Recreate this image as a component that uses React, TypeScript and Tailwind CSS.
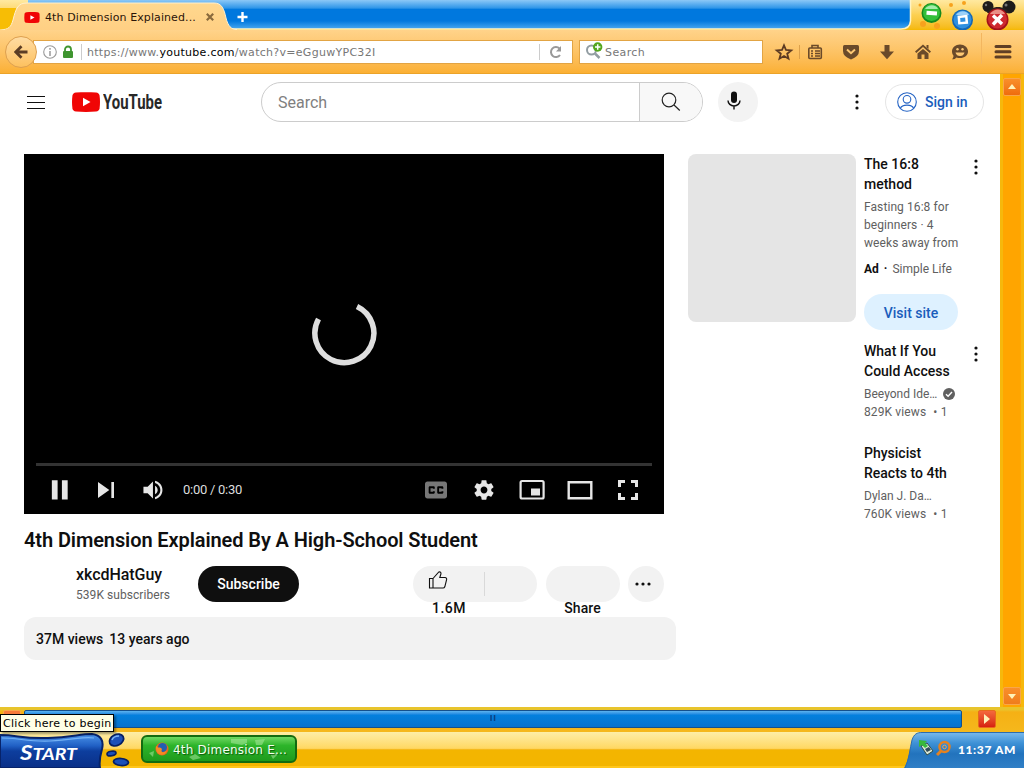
import React from "react";

type IconProps = { className?: string };

const Dots = ({ className = "" }: IconProps) => (
  <svg viewBox="0 0 4 16" className={`w-1 h-4 shrink-0 ${className}`} fill="#0f0f0f">
    <circle cx="2" cy="2" r="1.600" />
    <circle cx="2" cy="8" r="1.600" />
    <circle cx="2" cy="14" r="1.600" />
  </svg>
);

const PlayLogo = ({ className = "" }: IconProps) => (
  <svg viewBox="0 0 28 20" className={className}>
    <path
      d="M4 .5C10 0 18 0 24 .5c2 .2 3.300 1.300 3.600 3.300.5 4 .5 8.400 0 12.400-.3 2-1.600 3.100-3.600 3.300-6 .5-14 .5-20 0-2-.2-3.300-1.300-3.600-3.300-.5-4-.5-8.400 0-12.400C.7 1.800 2 .7 4 .5Z"
      fill="#f00505"
    />
    <path d="M11 5.700 18.500 10 11 14.300Z" fill="#fff" />
  </svg>
);

const TabStrip = () => (
  <div className="relative flex h-[30px] bg-linear-to-b from-[#ffe9a0] via-[#fcd050] to-[#f5b800]">
    <svg viewBox="0 0 1024 30" className="absolute inset-0 w-full h-full">
      <defs>
        <linearGradient id="strip" x1="0" y1="0" x2="0" y2="1">
          <stop offset="0" stopColor="#8cc8f6" />
          <stop offset="0.1" stopColor="#6ab6f2" />
          <stop offset="0.28" stopColor="#2e95e8" />
          <stop offset="0.32" stopColor="#0078de" />
          <stop offset="0.72" stopColor="#0078de" />
          <stop offset="0.9" stopColor="#2e97ea" />
          <stop offset="1" stopColor="#4ba8ee" />
        </linearGradient>
        <linearGradient id="tab" x1="0" y1="0" x2="0" y2="1">
          <stop offset="0" stopColor="#ffd88f" />
          <stop offset="1" stopColor="#ffcf83" />
        </linearGradient>
      </defs>
      <path d="M0 8H16V30H0Z" fill="#f7bd05" />
      <path d="M28 0H910V21Q910 29 901 29H28Z" fill="url(#strip)" />
      <path d="M910.500 0V21Q910 29 901 29H230" fill="none" stroke="#fff3c4" strokeWidth="1.500" />
      <path d="M0 30.500C9 30 11 27 13 20 16 8 18 3 27 3H214C222 3 224 9 226 18 228 26 231 29.500 237 29.500V31H0Z" fill="url(#tab)" />
      <path d="M0 30C9 29.500 11 27 13 20 16 8 18 3 27 3H214C222 3 224 9 226 18 228 26 231 29.500 237 29.500" fill="none" stroke="#fff0cf" strokeWidth="1" />
      <path d="M242.500 12V22M237.500 17H247.500" stroke="#fff" strokeWidth="2.400" />
      <g fill="#f7a21d">
        <circle cx="923" cy="24" r="3" />
        <circle cx="937" cy="26" r="3" />
        <circle cx="951" cy="5" r="2" />
        <circle cx="964" cy="3" r="2" />
        <circle cx="920" cy="5" r="1.500" />
      </g>
      <g>
        <circle cx="931.500" cy="13" r="10" fill="#16891d" />
        <circle cx="931.500" cy="12.500" r="8.500" fill="#32bf3a" />
        <path d="M925 9C928 4 936 4 938 9Z" fill="#a6ecaa" />
        <rect x="926.500" y="11" width="10.500" height="4" fill="#fff" transform="rotate(4 931 13)" />
      </g>
      <g>
        <circle cx="962.500" cy="20" r="10.500" fill="#1467b4" />
        <circle cx="962.500" cy="19.500" r="9" fill="#2f90e0" />
        <path d="M956 15C959 10 967 10 969 15Z" fill="#9cd0f8" />
        <rect x="959" y="16.500" width="7.500" height="6.500" fill="none" stroke="#fff" strokeWidth="2.500" transform="rotate(-5 962 19)" />
      </g>
      <g>
        <circle cx="988" cy="6.500" r="5.500" fill="#1d1b1b" />
        <circle cx="1009" cy="7" r="6.500" fill="#1d1b1b" />
        <path d="M987 13C990 5 1006 5 1009 13Z" fill="#2b2020" />
        <circle cx="997.500" cy="19.500" r="11" fill="#a31219" />
        <circle cx="997.500" cy="19" r="9.500" fill="#cf2a30" />
        <path d="M990 14C994 8 1002 8 1005 14Z" fill="#ea8f86" />
        <path d="M993 15.500 1002 24M1002 15 993 24.500" stroke="#fff" strokeWidth="3.400" />
      </g>
      <circle cx="1006" cy="5" r="1.500" fill="#777" />
      <circle cx="986" cy="5" r="1.200" fill="#777" />
    </svg>
    <div className="relative flex items-center h-[34px] pl-6 font-['DejaVu_Sans'] text-[11px] text-[#2b1408]">
      <PlayLogo className="w-4 h-[11px]" />
      <span className="ml-[5px] pt-[2px] w-[152px] whitespace-nowrap tracking-[0.1px]">4th Dimension Explained...</span>
      <svg viewBox="0 0 8 8" className="w-2 h-2 ml-[9px]" stroke="#8a6a3c" strokeWidth="2.200">
        <path d="M.8.8 7.200 7.200M7.200.8.8 7.200" />
      </svg>
    </div>
  </div>
);

const ToolbarIcons = () => (
  <svg viewBox="0 0 248 44" className="w-[248px] h-11" fill="#6a4a2a">
    <path
      d="m12 15.300 2 4.700 5.200.4-4 3.300 1.300 5-4.500-2.700-4.500 2.700 1.300-5-4-3.300 5.200-.4Z"
      fill="none"
      stroke="#5d3b22"
      strokeWidth="1.800"
    />
    <path d="M27.500 15V29" stroke="#dca04a" />
    <g fill="none" stroke="#6a4a2a" strokeWidth="1.600">
      <rect x="36.800" y="18" width="12.500" height="10.500" rx="1" />
      <path d="M40 18V15.500H46V18M39 21H41M43 21H48M39 23.500H41M43 23.500H48M39 26H41M43 26H48" />
    </g>
    <path d="M71 16.500Q71 15 72.500 15H85.500Q87 15 87 16.500V21Q87 26.500 79 29.500 71 26.500 71 21Z" />
    <path d="m75 19.500 4 3.700 4-3.700" stroke="#fdc873" strokeWidth="2" fill="none" />
    <path d="M112.500 15H117.500V21.500H122L115 29.300 108 21.500H112.500Z" />
    <path d="m151 14.500 8 7-1.300 1.400-6.700-5.800-6.700 5.800L143 21.500Z" />
    <path d="m151 19 5.500 4.500V29H152.500V24.500H149.500V29H145.500V23.500Z" />
    <path d="M154.500 15H156.500V19L154.500 17.500Z" />
    <path d="M188 14.500C192.500 14.500 196 17.500 196 21.500S192.500 28 188 28C186.500 28 185.500 27.800 184.500 27.400 183.500 28.700 182 29.300 180 29.300 181 28.300 181.500 27 181.500 25.800 180.500 24.500 180 23 180 21.500 180 17.500 183.500 14.500 188 14.500Z" />
    <path d="M183.500 22.500H192.500Q191.500 26 188 26T183.500 22.500Z" fill="#fdc873" />
    <circle cx="185.500" cy="19.300" r="1.200" fill="#fdc873" />
    <circle cx="190.500" cy="19.300" r="1.200" fill="#fdc873" />
    <path d="M209.500 3V34" stroke="#f3b65f" />
    <path d="M224 16.500H238M224 21.800H238M224 27.100H238" stroke="#5f3f25" strokeWidth="3" strokeLinecap="round" />
  </svg>
);

const Toolbar = () => (
  <div className="relative flex items-center h-11 bg-linear-to-b from-[#ffd38a] via-[#fdc365] to-[#fbb033] border-b border-[#eba329] font-['DejaVu_Sans'] text-[11px] text-[#777]">
    <div className="z-10 ml-[5px] w-8 h-8 rounded-full border border-[#dda050] bg-linear-to-b from-[#ffdca2] to-[#fdc15e] flex items-center justify-center shrink-0">
      <svg viewBox="0 0 14 14" className="w-[14px] h-[14px]" fill="none" stroke="#5b3d25" strokeWidth="2.800">
        <path d="M13.500 7H2.500M7.500 1.300 1.800 7 7.500 12.700" />
      </svg>
    </div>
    <div className="flex items-center w-[540px] h-6 -ml-1 bg-white border border-[#e2a444]">
      <svg viewBox="0 0 34 16" className="w-[34px] h-4 ml-2 mr-1">
        <circle cx="8" cy="8" r="6.300" fill="none" stroke="#999" strokeWidth="1.100" />
        <path d="M8 7V12M8 4V5.700" stroke="#999" strokeWidth="1.500" />
        <rect x="21" y="7" width="10" height="7" rx="1" fill="#3f9530" />
        <path d="M23 8V5.500a3 3 0 0 1 6 0V8" fill="none" stroke="#3f9530" strokeWidth="1.800" />
      </svg>
      <div className="h-4 border-l border-[#ccc] ml-[1px] mr-[5px]" />
      <span className="flex-1 pt-[3px] whitespace-nowrap tracking-[0.29px]">
        https://www.<span className="text-black">youtube.com</span>/watch?v=eGguwYPC32I
      </span>
      <div className="h-4 border-l border-[#ccc]" />
      <svg viewBox="0 0 14 14" className="w-[14px] h-[14px] mx-[9px]" fill="none" stroke="#999" strokeWidth="2">
        <path d="M11 10A5 5 0 1 1 10.500 3.500" />
        <path d="M12 1V6.500H7Z" fill="#999" stroke="none" />
      </svg>
    </div>
    <div className="flex items-center w-[184px] h-6 ml-[6px] bg-white border border-[#e2a444]">
      <svg viewBox="0 0 18 18" className="w-[18px] h-[18px] ml-[5px] mr-[2px] mb-[1px]" fill="none">
        <circle cx="6.500" cy="8" r="4.500" stroke="#929da2" strokeWidth="2" />
        <path d="M10 11.500 14.500 16" stroke="#929da2" strokeWidth="2.500" />
        <circle cx="12.700" cy="5" r="4.700" fill="#53a61e" />
        <path d="M12.700 2.300V7.700M10 5H15.400" stroke="#fff" strokeWidth="1.500" />
      </svg>
      <span className="pt-[3px] tracking-[0.4px]">Search</span>
    </div>
    <div className="ml-[9px]">
      <ToolbarIcons />
    </div>
  </div>
);

const Masthead = () => (
  <header className="flex items-center h-14 pl-[27px] pr-4">
    <svg viewBox="0 0 18 13" className="w-[18px] h-[13px]" stroke="#0f0f0f">
      <path d="M0 .5H18M0 6.500H18M0 12.500H18" />
    </svg>
    <div className="flex items-center ml-[27px]">
      <PlayLogo className="w-7 h-5" />
      <svg viewBox="0 0 64 28" className="w-16 h-7 ml-[3px]">
        <text
          x="0"
          y="20.500"
          textLength="59"
          lengthAdjust="spacingAndGlyphs"
          className="font-[Roboto] font-bold text-[21px]"
          fill="#282828"
        >
          YouTube
        </text>
      </svg>
    </div>
    <div className="flex w-[442px] h-10 ml-[94px] rounded-full border border-[#ccc] overflow-hidden">
      <div className="w-[377px] pl-4 pt-[2px] flex items-center text-[16px] text-[#808080]">Search</div>
      <div className="flex-1 flex items-center justify-center border-l border-[#ccc] bg-[#f8f8f8]">
        <svg viewBox="0 0 20 20" className="w-5 h-5" fill="none" stroke="#222" strokeWidth="1.200">
          <circle cx="8" cy="8" r="6.800" />
          <path d="m13 13 5.800 5.500" />
        </svg>
      </div>
    </div>
    <div className="w-10 h-10 ml-[15px] rounded-full bg-[#f3f3f3] flex items-center pl-[9px]">
      <svg viewBox="0 0 14 20" className="w-[14px] h-5 mb-[2px]">
        <rect x="4" y="0.500" width="6" height="11.500" rx="3" fill="#0f0f0f" />
        <path d="M1 9.500a6 5.500 0 0 0 12 0M7 15V18.500" fill="none" stroke="#0f0f0f" strokeWidth="1.400" />
      </svg>
    </div>
    <Dots className="ml-[97px]" />
    <div className="ml-auto w-[99px] h-9 rounded-full border border-[#e5e5e5] flex items-center pl-[11px] text-[14px] font-medium text-[#1a5dbb]">
      <svg viewBox="0 0 20 20" className="w-5 h-5 mr-2" fill="none" stroke="#2463c4" strokeWidth="1.100">
        <circle cx="10" cy="10" r="9.300" />
        <circle cx="10" cy="7.300" r="3.800" />
        <path d="M3.300 16.500C5 12 15 12 16.700 16.500" />
      </svg>
      Sign in
    </div>
  </header>
);

const Player = () => (
  <div className="w-[640px] h-[360px] bg-black flex flex-col px-3">
    <div className="flex-1 flex items-center justify-center pt-12">
      <svg viewBox="0 0 66 66" className="w-[66px] h-[66px]">
        <path
          d="M46 6.500A29.500 29.500 0 1 1 7.500 19"
          fill="none"
          stroke="#dedede"
          strokeWidth="5.500"
        />
      </svg>
    </div>
    <div className="h-[3px] bg-[#333] shrink-0" />
    <div className="flex items-center h-12 text-[#e6e6e6]">
      <svg viewBox="0 0 48 48" className="w-[46px] h-[46px] ml-[1px]" fill="#e6e6e6">
        <path d="M15.500 13.800h6v20h-6ZM26 13.800h6v20h-6Z" />
      </svg>
      <svg viewBox="0 0 36 36" className="w-[48px] h-[48px] -ml-[1px]" fill="#e6e6e6">
        <path d="M12 24 20.500 18 12 12V24ZM22 12v12h2V12h-2Z" />
      </svg>
      <svg viewBox="0 0 36 36" className="w-[38px] h-[38px] ml-[5px]" fill="#e6e6e6">
        <path d="M8 21H12L17 26V10L12 15H8V21ZM19 14V22C20.480 21.320 21.500 19.770 21.500 18 21.500 16.260 20.480 14.740 19 14ZM19 11.290C21.890 12.150 24 14.830 24 18S21.890 23.850 19 24.710V26.770C23.010 25.860 26 22.280 26 18S23.010 10.140 19 9.230V11.290Z" />
      </svg>
      <span className="ml-[10px] text-[13px] text-[#ddd] tracking-[-0.27px]">0:00 / 0:30</span>
      <div className="flex items-center ml-auto">
        <svg viewBox="0 0 36 36" className="w-11 h-11 mx-[2px]" fill="#777" fillRule="evenodd">
          <path d="M11 11C9.890 11 9 11.900 9 13V23C9 24.100 9.890 25 11 25H25C26.100 25 27 24.100 27 23V13C27 11.900 26.100 11 25 11H11ZM17 17H15.500V16.500H13.500V19.500H15.500V19H17V20C17 20.550 16.550 21 16 21H13C12.450 21 12 20.550 12 20V16C12 15.450 12.450 15 13 15H16C16.550 15 17 15.450 17 16V17ZM24 17H22.500V16.500H20.500V19.500H22.500V19H24V20C24 20.550 23.550 21 23 21H20C19.450 21 19 20.550 19 20V16C19 15.450 19.450 15 20 15H23C23.550 15 24 15.450 24 16V17Z" />
        </svg>
        <svg viewBox="0 0 36 36" className="w-11 h-11 mx-[2px]" fill="#e6e6e6">
          <path d="m23.940 18.780c.03-.25.05-.51.05-.78 0-.27-.02-.52-.05-.78l1.680-1.320c.15-.12.19-.33.09-.51l-1.600-2.760c-.09-.17-.31-.24-.48-.17l-1.990.8c-.41-.32-.86-.58-1.350-.78l-.30-2.120c-.02-.19-.19-.33-.39-.33l-3.200 0c-.2 0-.36.14-.39.33l-.30 2.120c-.48.2-.93.47-1.350.78l-1.990-.8c-.18-.07-.39 0-.48.17l-1.600 2.760c-.10.17-.05.39.09.51l1.680 1.320c-.03.25-.05.52-.05.78 0 .26.02.52.05.78l-1.680 1.320c-.15.12-.19.33-.09.51l1.600 2.760c.09.17.31.24.48.17l1.990-.8c.41.32.86.58 1.350.78l.30 2.120c.02.19.19.33.39.33l3.200 0c.2 0 .36-.14.39-.33l.30-2.120c.48-.2.93-.47 1.350-.78l1.990.8c.18.07.39 0 .48-.17l1.600-2.760c.09-.17.05-.39-.09-.51l-1.680-1.320zm-5.940 2.010c-1.540 0-2.800-1.250-2.800-2.800 0-1.540 1.250-2.800 2.800-2.800 1.540 0 2.800 1.250 2.800 2.800 0 1.540-1.250 2.800-2.800 2.800z" />
        </svg>
        <svg viewBox="0 0 48 48" className="w-12 h-12" fill="none" stroke="#e6e6e6" strokeWidth="2.200">
          <rect x="12.600" y="15" width="23" height="17.500" rx="1.500" />
          <path d="M23 22.500h9v7h-9Z" fill="#e6e6e6" stroke="none" />
        </svg>
        <svg viewBox="0 0 48 48" className="w-12 h-12" fill="none" stroke="#e6e6e6" strokeWidth="2.400">
          <path d="M12.700 16.200H35.300V32.300H12.700Z" />
        </svg>
        <svg viewBox="0 0 48 48" className="w-12 h-12" fill="none" stroke="#e6e6e6" strokeWidth="3">
          <path d="M15.500 21V15.500H21M27 15.500H32.500V21M32.500 27V32.500H27M21 32.500H15.500V27" />
        </svg>
      </div>
    </div>
  </div>
);

const VideoInfo = () => (
  <div className="text-[#0f0f0f]">
    <h1 className="mt-3 text-[20px] leading-7 font-semibold whitespace-nowrap tracking-[-0.1px]">
      4th Dimension Explained By A High-School Student
    </h1>
    <div className="flex items-start mt-3 h-[51px]">
      <div className="ml-[52px] w-[122px] whitespace-nowrap -mt-[2px]">
        <p className="text-[16px] leading-[22px] font-medium tracking-[-0.05px]">xkcdHatGuy</p>
        <p className="text-[12px] leading-[18px] text-[#606060] tracking-[0.06px]">539K subscribers</p>
      </div>
      <div className="w-[101px] h-9 rounded-full bg-[#0f0f0f] text-white text-[14px] font-medium flex items-center justify-center">
        Subscribe
      </div>
      <div className="w-[124px] ml-[114px]">
        <div className="flex items-center h-9 rounded-full bg-[#f2f2f2]">
          <svg viewBox="0 0 20 20" className="w-5 h-5 ml-[15px] mb-[9px]" fill="none" stroke="#0f0f0f" strokeWidth="1.100">
            <path d="M1.500 8.500H5V18H1.500ZM5 8.500 10.800 2C12.500 1.600 13.300 2.700 12.900 4L11.800 7.500H17C18.400 7.500 18.900 8.700 18.600 9.700L16.800 16.800C16.500 17.600 15.800 18 15 18H5" />
          </svg>
          <div className="h-6 ml-[36px] border-l border-[#d9d9d9]" />
        </div>
        <p className="-mt-[2px] pl-[19px] text-[14px] leading-4 font-medium tracking-[0.5px]">1.6M</p>
      </div>
      <div className="w-[74px] ml-[9px]">
        <div className="h-9 rounded-full bg-[#f2f2f2]" />
        <p className="-mt-[2px] -ml-[1px] text-center text-[14px] leading-4 font-medium tracking-[0.1px]">Share</p>
      </div>
      <div className="w-9 h-9 ml-2 rounded-full bg-[#f2f2f2] flex items-center justify-center">
        <svg viewBox="0 0 16 4" className="w-4 h-1 mr-[6px]" fill="#0f0f0f">
          <circle cx="2" cy="2" r="1.600" />
          <circle cx="8" cy="2" r="1.600" />
          <circle cx="14" cy="2" r="1.600" />
        </svg>
      </div>
    </div>
    <div className="flex items-center gap-[6px] w-[652px] h-[43px] pl-3 pt-[2px] rounded-xl bg-[#f2f2f2] text-[14px] font-medium">
      <span>37M views</span>
      <span>13 years ago</span>
    </div>
  </div>
);

type Related = { title: string[]; channel: string; verified?: boolean; views: string };

const related: Related[] = [
  { title: ["What If You", "Could Access"], channel: "Beeyond Ide…", verified: true, views: "829K views" },
  { title: ["Physicist", "Reacts to 4th"], channel: "Dylan J. Da…", views: "760K views" },
];

const Sidebar = () => (
  <aside className="ml-6 w-[296px] text-[12px] leading-[18px] text-[#606060] whitespace-nowrap">
    <div className="flex">
      <div className="w-[168px] h-[168px] rounded-lg bg-[#e5e5e5]" />
      <div className="ml-2 w-[110px]">
        <h3 className="text-[14px] leading-5 font-medium text-[#0f0f0f]">
          The 16:8
          <br />
          method
        </h3>
        <p className="mt-1 tracking-[0.08px]">
          Fasting 16:8 for
          <br />
          beginners · 4
          <br />
          weeks away from
        </p>
        <p className="mt-2">
          <b className="font-bold text-[#0f0f0f]">Ad</b>
          <span className="mx-[5px] font-bold text-[#0f0f0f]">·</span>
          Simple Life
        </p>
        <div className="mt-4 w-[94px] h-9 pt-[2px] rounded-full bg-[#def1ff] flex items-center justify-center text-[14px] font-medium text-[#1a5dbb]">
          Visit site
        </div>
      </div>
      <Dots className="mt-[5px]" />
    </div>
    {related.map((v, i) => (
      <div key={v.views} className={i === 0 ? "flex mt-[11px] h-[102px]" : "flex"}>
        <div className="ml-[176px] w-[110px]">
          <h3 className="text-[14px] leading-5 font-medium text-[#0f0f0f]">
            {v.title[0]}
            <br />
            {v.title[1]}
          </h3>
          <div className="flex items-center mt-1">
            <span className="w-[73px]">{v.channel}</span>
            {v.verified && (
              <svg viewBox="0 0 12 12" className="w-3 h-3 ml-[6px]">
                <circle cx="6" cy="6" r="6" fill="#606060" />
                <path d="m3 6.200 2.100 2.100L9 4" fill="none" stroke="#fff" strokeWidth="1.400" />
              </svg>
            )}
          </div>
          <p className="tracking-[0.12px]">
            {v.views} <span className="ml-1">•</span> 1
          </p>
        </div>
        {v.verified && <Dots className="mt-[5px]" />}
      </div>
    ))}
  </aside>
);

const ScrollButton = ({ d, className }: { d: string; className: string }) => (
  <div className={`w-[18px] h-[18px] rounded-xs flex items-center justify-center ${className}`}>
    <svg viewBox="0 0 10 10" className="w-[10px] h-[10px]" fill="#fff2b8">
      <path d={d} />
    </svg>
  </div>
);

const VerticalScrollbar = () => (
  <div className="w-6 h-full flex flex-col items-center justify-between pt-1 pb-[2px] bg-[#ffa500] border-l-[3px] border-r-[3px] border-[#f6b80c]">
    <ScrollButton d="M5 2 9 7H1Z" className="bg-linear-to-b from-[#f98f2a] to-[#ef6c0c] border border-[#f9a64a]" />
    <ScrollButton d="M5 8 9 3H1Z" className="bg-linear-to-b from-[#f98f2a] to-[#ef7c1c] border border-[#f9a64a]" />
  </div>
);

const HorizontalScrollbar = () => (
  <div className="flex items-start h-[25px] pt-[3px] bg-linear-to-b from-[#e8c42c] from-10% via-[#f5b014] via-20% to-[#f5b81c]">
    <ScrollButton d="M2 5 7 1V9Z" className="ml-[3px] bg-[#f77a3a] border border-[#f9a64a]" />
    <div className="flex justify-center w-[938px] h-[18px] ml-[3px] rounded-xs border border-[#15508c] bg-linear-to-b from-[#5cb4f0] via-[#0380de] via-25% to-[#0872cc]">
      <svg viewBox="0 0 6 8" className="w-[6px] h-2 mt-[4px]" stroke="#0b4284">
        <path d="M1 0V6M4.500 0V6" strokeWidth="1.500" />
      </svg>
    </div>
    <ScrollButton d="M2 0 8 5 2 10Z" className="ml-4 bg-linear-to-b from-[#f4683c] to-[#d62010] border border-[#e86a1c]" />
  </div>
);

const Taskbar = () => (
  <div className="relative flex h-9 bg-linear-to-b from-[#fdeea6] via-[#ffd862] via-48% to-[#f3b500] to-52% border-b-2 border-[#ffc61c]">
    <svg viewBox="0 0 140 36" className="w-[140px] h-9 shrink-0">
      <defs>
        <linearGradient id="start" x1="0" y1="0" x2="0" y2="1">
          <stop offset="0" stopColor="#4b94ea" />
          <stop offset="0.35" stopColor="#205fc4" />
          <stop offset="0.5" stopColor="#0d3e9e" />
          <stop offset="1" stopColor="#0a2f87" />
        </linearGradient>
      </defs>
      <path d="M0 3C18 3 22 7 48 6 72 5 80 2 92 2 101 3 104 9 102 17 100 24 99 30 100 36H0Z" fill="url(#start)" stroke="#07236a" strokeWidth="2" />
      <path d="M2 6C18 6 30 10 50 9 74 8 84 4 94 6" fill="none" stroke="#74b2f4" strokeWidth="1.200" />
      <text x="20" y="28" textLength="57" lengthAdjust="spacingAndGlyphs" fill="#fff" className="font-[Lato] italic font-bold text-[17px]">
        <tspan fontSize="21">S</tspan>TART
      </text>
      <g fill="#1d50b8" stroke="#071f63" strokeWidth="1.700">
        <ellipse cx="116.500" cy="8" rx="7.500" ry="5.500" transform="rotate(-28 116.500 8)" />
        <ellipse cx="111.500" cy="21.500" rx="4.500" ry="2.300" transform="rotate(-10 111.500 21.500)" />
        <ellipse cx="121" cy="30" rx="7.500" ry="3.500" transform="rotate(5 121 30)" />
      </g>
      <path d="M112 8C113 5 116 4 119 4" stroke="#7ab2f5" strokeWidth="1.500" fill="none" />
    </svg>
    <div className="relative flex items-center w-[156px] h-7 mt-[3px] ml-[1px] pl-3 rounded-md border-2 border-[#136b10] bg-linear-to-b from-[#6cd860] via-[#2db52a] via-35% to-[#1f9a1c] font-['DejaVu_Sans'] text-[12px] text-[#f4fff0]">
      <svg viewBox="0 0 152 24" className="absolute inset-0 w-full h-full" fill="#a8e89c" opacity="0.55">
        <path d="M88 2H104V6L99 8 88 6ZM112 3 122 2 119 8H113ZM46 20 52 17 58 21 50 23ZM126 15 135 17 130 22ZM6 16 11 14 10 20Z" />
      </svg>
      <svg viewBox="0 0 14 14" className="relative w-[14px] h-[14px] mr-1 shrink-0">
        <circle cx="7" cy="7" r="6.500" fill="#e8681c" />
        <circle cx="7.500" cy="5.500" r="4.500" fill="#225fb0" />
        <path d="M1 4C3 7 5 4 7 7 5 11 10 11 12 8 11 15 0 15 1 4Z" fill="#f58a25" />
      </svg>
      <span className="relative pt-[2px] whitespace-nowrap tracking-[0.2px] [text-shadow:1px_1px_1px_#0b5a0b]">4th Dimension E...</span>
    </div>
    <div className="relative ml-auto w-[120px] h-9">
      <svg viewBox="0 0 120 36" className="absolute inset-0 w-full h-full">
        <defs>
          <linearGradient id="tray" x1="0" y1="0" x2="0" y2="1">
            <stop offset="0" stopColor="#79b9ec" />
            <stop offset="0.3" stopColor="#3e91d6" />
            <stop offset="0.6" stopColor="#2273bd" />
            <stop offset="1" stopColor="#307fc6" />
          </linearGradient>
        </defs>
        <path d="M0 36C5 28 6 16 8 8 10 2 13 .5 18 .5H120V36Z" fill="url(#tray)" />
        <path d="M1 36C5 28 6 16 8 8 10 2 13 .5 18 .5H120" fill="none" stroke="#2c6cae" />
        <path d="m17 14 6-3 6 8-6 4Z" fill="#dce8d8" stroke="#324d42" />
        <path d="m15 8 8 1-2 2 3 3-3 2-3-3-3 2Z" fill="#38b93a" />
        <path d="m21 17 4-2 2 3-4 2Z" fill="#304c5a" />
        <circle cx="40.500" cy="15" r="5" fill="none" stroke="#e58220" strokeWidth="2.500" />
        <path d="m37 19-4 4" stroke="#e58220" strokeWidth="3" />
        <circle cx="40.500" cy="15" r="1.800" fill="none" stroke="#f2a450" />
      </svg>
      <span className="relative flex items-center h-full pl-[54px] pb-[1px] font-[Lato] font-black text-[12px] text-white whitespace-nowrap tracking-[0.6px]">
        11:37 AM
      </span>
    </div>
  </div>
);

const App = () => {
  return (
    <div className="relative w-[1024px] h-[768px] overflow-hidden flex flex-col bg-[#f5b81c]">
      <TabStrip />
      <Toolbar />
      <div className="flex h-[633px]">
        <main className="w-[1000px] bg-white font-[Roboto]">
          <Masthead />
          <div className="flex pt-6 pl-6">
            <div className="w-[640px]">
              <Player />
              <VideoInfo />
            </div>
            <Sidebar />
          </div>
        </main>
        <VerticalScrollbar />
      </div>
      <HorizontalScrollbar />
      <Taskbar />
      <div className="absolute left-0 top-[714px] w-[114px] h-[18px] pl-[2px] pt-[2px] flex items-center bg-[#ffffe6] border border-black shadow-[2px_2px_2px_rgba(0,0,0,0.35)] font-['DejaVu_Sans'] text-[11px] text-black whitespace-nowrap tracking-[0.28px]">
        Click here to begin
      </div>
    </div>
  );
};

export default App;
